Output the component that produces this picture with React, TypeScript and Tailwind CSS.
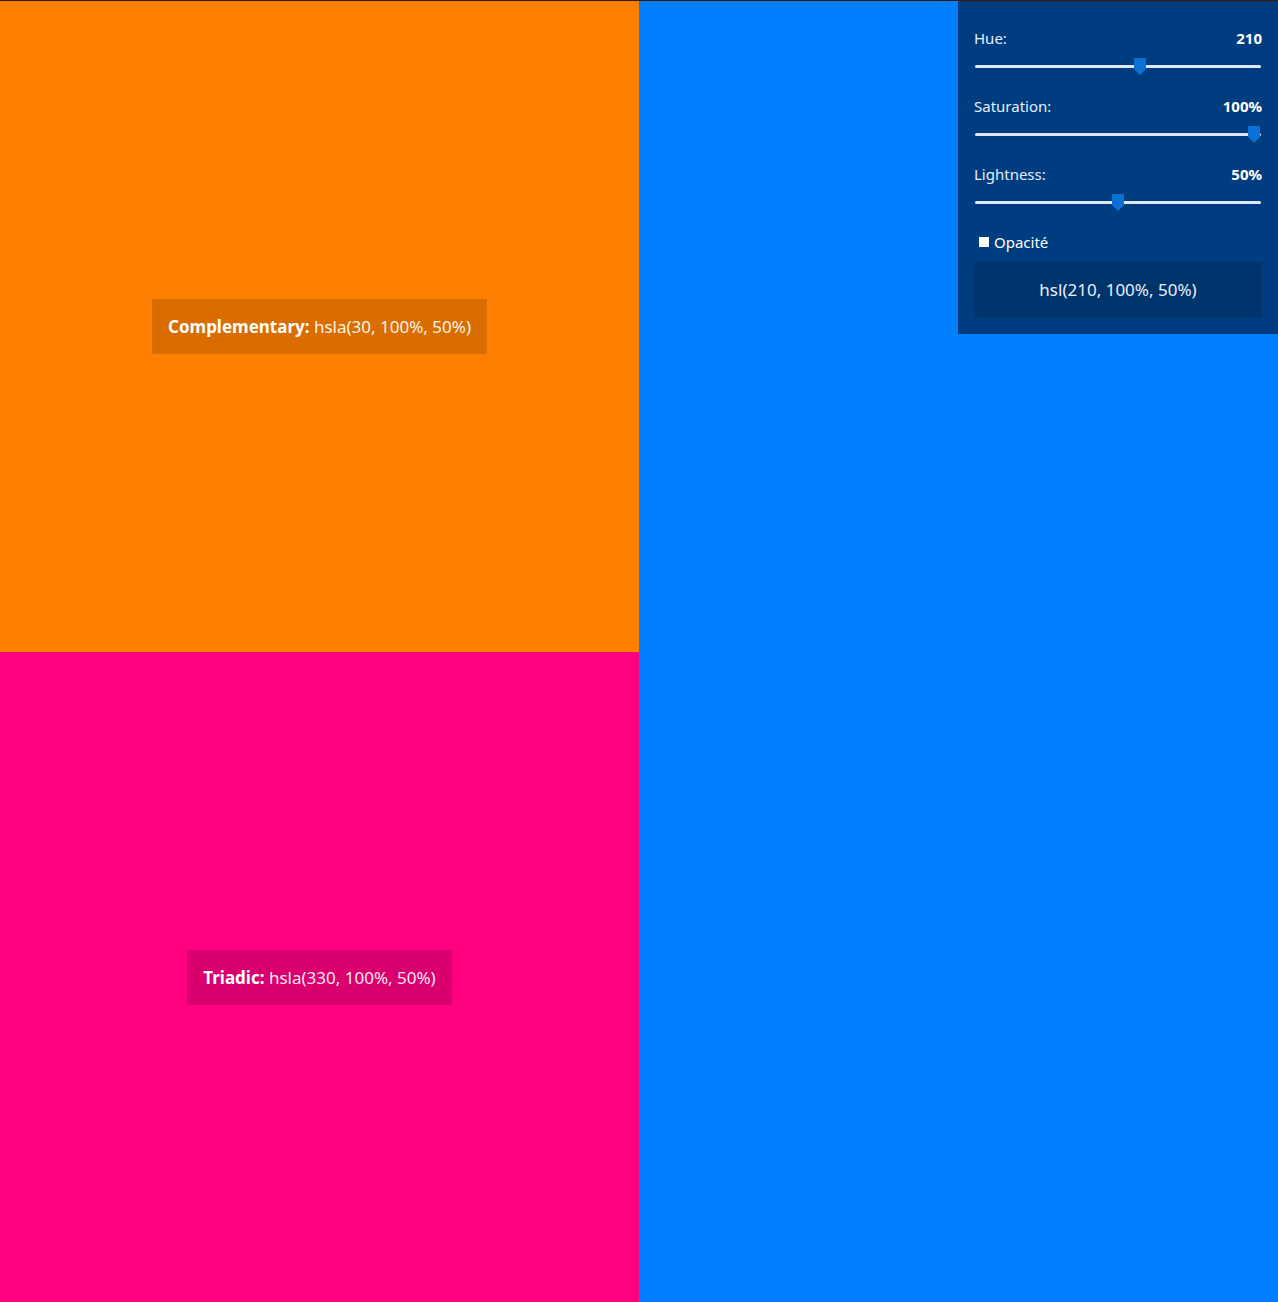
import { useState } from 'react';

type SliderProps = { label: string; value: number; max: number; unit?: string };

function Slider({ label, value, max, unit = '' }: SliderProps) {
  const frac = value / max;
  return (
    <div className="mb-[24px]">
      <div className="flex items-center justify-between text-[15px] leading-[20px] text-[#e6eef8]">
        <span>{label}</span>
        <span className="font-bold text-white">
          {value}
          {unit}
        </span>
      </div>
      <div className="relative ml-[1px] mr-[1px] mt-[12px] h-[12px]">
        <div className="absolute left-0 right-0 top-[5px] h-[3px] rounded-full bg-[#dfe7f1]" />
        <div className="absolute top-[-2px]" style={{ left: `calc((100% - 13px) * ${frac})` }}>
          <svg width="12" height="17" viewBox="0 0 12 17">
            <path d="M1 0 H11 Q12 0 12 1 V11 L6 17 L0 11 V1 Q0 0 1 0 Z" fill="#0a72d6" />
          </svg>
        </div>
      </div>
    </div>
  );
}

export default function App() {
  const [hue] = useState(210);
  const [sat] = useState(100);
  const [light] = useState(50);

  return (
    <div className="relative grid h-[1302px] w-[1278px] grid-cols-[639px_1fr] grid-rows-[651px_651px] border-t border-[#3a1a00] font-['Noto_Sans',sans-serif]">
      <div className="flex items-center justify-center bg-[#ff8000]">
        <div className="bg-black/15 px-4 py-[14px] text-[17px] leading-[27px] text-[#fdf3e6]">
          <b className="text-white">Complementary:</b> hsla(30, 100%, 50%)
        </div>
      </div>
      <div className="row-span-2 bg-[#0080ff]" />
      <div className="flex items-center justify-center bg-[#ff0080]">
        <div className="bg-black/15 px-4 py-[14px] text-[17px] leading-[27px] text-[#fde6f1]">
          <b className="text-white">Triadic:</b> hsla(330, 100%, 50%)
        </div>
      </div>

      <div className="absolute right-0 top-0 w-[320px] bg-[#003d80] px-4 pb-4 pt-[27px]">
        <Slider label="Hue:" value={hue} max={360} />
        <Slider label="Saturation:" value={sat} max={100} unit="%" />
        <Slider label="Lightness:" value={light} max={100} unit="%" />
        <label className="mb-[10px] mt-[2px] flex items-center gap-[5px] pl-[5px] text-[15px] leading-[20px] text-white">
          <span className="h-[10px] w-[10px] bg-white" />
          Opacité
        </label>
        <div className="flex h-[56px] items-center justify-center bg-[#00346d] text-[17px] text-[#e8f0fa]">
          hsl({hue}, {sat}%, {light}%)
        </div>
      </div>
    </div>
  );
}
